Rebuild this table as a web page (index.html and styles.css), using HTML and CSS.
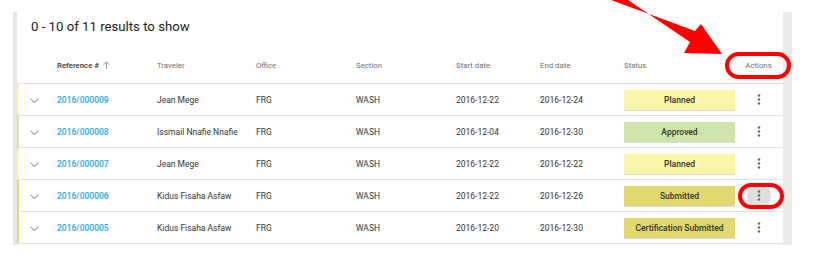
FILE: index.html
```html
<!DOCTYPE html>
<html>
<head>
<meta charset="utf-8">
<link rel="stylesheet" href="styles.css">
</head>
<body>
<div class="page">
  <div class="card">
    <div class="title">0 - 10 of 11 results to show</div>
    <div class="grid head">
      <div></div>
      <div class="sorted">Reference # <svg class="up" width="7" height="8" viewBox="0 0 7 8"><path d="M3.5 8V1M0.8 3.6L3.5 0.9L6.2 3.6" fill="none" stroke="#8a8a8a" stroke-width="0.9"/></svg></div>
      <div>Traveler</div>
      <div>Office</div>
      <div>Section</div>
      <div>Start date</div>
      <div>End date</div>
      <div>Status</div>
      <div class="act">Actions</div>
    </div>

    <div class="grid row planned-edge">
      <div class="chev"><svg width="9" height="6" viewBox="0 0 9 6"><path d="M0.7 0.9L4.5 4.6L8.3 0.9" fill="none" stroke="#9a9a9a" stroke-width="1.1"/></svg></div>
      <div class="link">2016/000009</div>
      <div>Jean Mege</div>
      <div>FRG</div>
      <div>WASH</div>
      <div>2016-12-22</div>
      <div>2016-12-24</div>
      <div><span class="pill planned">Planned</span></div>
      <div class="act"><span class="dots"><svg width="4" height="11" viewBox="0 0 4 11"><circle cx="2" cy="1.5" r="1.2"/><circle cx="2" cy="5.5" r="1.2"/><circle cx="2" cy="9.5" r="1.2"/></svg></span></div>
    </div>

    <div class="grid row approved-edge">
      <div class="chev"><svg width="9" height="6" viewBox="0 0 9 6"><path d="M0.7 0.9L4.5 4.6L8.3 0.9" fill="none" stroke="#9a9a9a" stroke-width="1.1"/></svg></div>
      <div class="link">2016/000008</div>
      <div>Issmail Nnafie Nnafie</div>
      <div>FRG</div>
      <div>WASH</div>
      <div>2016-12-04</div>
      <div>2016-12-30</div>
      <div><span class="pill approved">Approved</span></div>
      <div class="act"><span class="dots"><svg width="4" height="11" viewBox="0 0 4 11"><circle cx="2" cy="1.5" r="1.2"/><circle cx="2" cy="5.5" r="1.2"/><circle cx="2" cy="9.5" r="1.2"/></svg></span></div>
    </div>

    <div class="grid row planned-edge">
      <div class="chev"><svg width="9" height="6" viewBox="0 0 9 6"><path d="M0.7 0.9L4.5 4.6L8.3 0.9" fill="none" stroke="#9a9a9a" stroke-width="1.1"/></svg></div>
      <div class="link">2016/000007</div>
      <div>Jean Mege</div>
      <div>FRG</div>
      <div>WASH</div>
      <div>2016-12-22</div>
      <div>2016-12-22</div>
      <div><span class="pill planned">Planned</span></div>
      <div class="act"><span class="dots"><svg width="4" height="11" viewBox="0 0 4 11"><circle cx="2" cy="1.5" r="1.2"/><circle cx="2" cy="5.5" r="1.2"/><circle cx="2" cy="9.5" r="1.2"/></svg></span></div>
    </div>

    <div class="grid row submitted-edge">
      <div class="chev"><svg width="9" height="6" viewBox="0 0 9 6"><path d="M0.7 0.9L4.5 4.6L8.3 0.9" fill="none" stroke="#9a9a9a" stroke-width="1.1"/></svg></div>
      <div class="link">2016/000006</div>
      <div>Kidus Fisaha Asfaw</div>
      <div>FRG</div>
      <div>WASH</div>
      <div>2016-12-22</div>
      <div>2016-12-26</div>
      <div><span class="pill submitted">Submitted</span></div>
      <div class="act"><span class="dots hover"><svg width="4" height="11" viewBox="0 0 4 11"><circle cx="2" cy="1.5" r="1.2"/><circle cx="2" cy="5.5" r="1.2"/><circle cx="2" cy="9.5" r="1.2"/></svg></span></div>
    </div>

    <div class="grid row submitted-edge">
      <div class="chev"><svg width="9" height="6" viewBox="0 0 9 6"><path d="M0.7 0.9L4.5 4.6L8.3 0.9" fill="none" stroke="#9a9a9a" stroke-width="1.1"/></svg></div>
      <div class="link">2016/000005</div>
      <div>Kidus Fisaha Asfaw</div>
      <div>FRG</div>
      <div>WASH</div>
      <div>2016-12-20</div>
      <div>2016-12-30</div>
      <div><span class="pill submitted">Certification Submitted</span></div>
      <div class="act"><span class="dots"><svg width="4" height="11" viewBox="0 0 4 11"><circle cx="2" cy="1.5" r="1.2"/><circle cx="2" cy="5.5" r="1.2"/><circle cx="2" cy="9.5" r="1.2"/></svg></span></div>
    </div>
  </div>

  <div class="ring ring-head"></div>
  <div class="ring ring-row"></div>
  <svg class="arrow" width="818" height="255" viewBox="0 0 818 255">
    <polygon points="611,0 628,0 690,42 684,53 722,54 701,24 695,31" fill="#ff0000"/>
  </svg>
</div>
</body>
</html>
```

FILE: styles.css
```css
html, body {
  margin: 0;
  background: #fff;
}

body {
  font-family: Roboto, "Liberation Sans", sans-serif;
  color: #333;
}

.page {
  position: relative;
  width: 818px;
  height: 255px;
  padding: 12px 0 0 13px;
  box-sizing: border-box;
  overflow: hidden;
}

.card {
  width: 779px;
  height: 233px;
  box-sizing: border-box;
  background: #fff;
  border-left: 4px solid #e6e6e6;
  border-right: 9px solid #ebebeb;
}

.title {
  font-size: 13.2px;
  line-height: 16px;
  color: #222;
  padding: 7px 0 12px 14px;
}

.grid {
  display: grid;
  grid-template-columns: 38px 100px 99px 100px 100px 84px 84px 111px 1fr;
  align-items: center;
  box-sizing: border-box;
  border-left: 2px solid transparent;
  border-bottom: 1px solid #e2e2e2;
}

.head {
  height: 37px;
  font-size: 7.8px;
  color: #707070;
  border-bottom-color: #dcdcdc;
}

.head .sorted {
  color: #333;
  font-weight: 500;
  display: flex;
  align-items: center;
  gap: 4px;
}

.row {
  height: 32px;
  font-size: 8.5px;
  color: #333;
}

.planned-edge { border-left-color: #fbf5aa; }
.approved-edge { border-left-color: #cde5a8; }
.submitted-edge { border-left-color: #e1d86e; }

.chev {
  display: flex;
  padding-left: 11px;
  padding-top: 2px;
}

.link {
  color: #1aa9ea;
  font-weight: 500;
}

.pill {
  display: flex;
  align-items: center;
  justify-content: center;
  height: 20px;
  font-weight: 500;
  color: #333;
  box-shadow: 0 1px 0 rgba(0, 0, 0, 0.14);
}

.planned { background: #fbf5aa; }
.approved { background: #cde5a8; }
.submitted { background: #e1d86e; }

.act {
  display: flex;
  justify-content: center;
  padding-right: 1px;
}

.dots {
  display: flex;
  align-items: center;
  justify-content: center;
  width: 24px;
  height: 24px;
  border-radius: 50%;
  fill: #666;
}

.dots.hover {
  background: #dedede;
}

.ring {
  position: absolute;
  box-sizing: border-box;
  border: 4px solid #ff0000;
}

.ring-head {
  left: 725px;
  top: 52px;
  width: 66px;
  height: 27px;
  border-radius: 14px;
}

.ring-row {
  left: 738px;
  top: 183px;
  width: 46px;
  height: 26px;
  border-radius: 13px;
}

.arrow {
  position: absolute;
  left: 0;
  top: 0;
  pointer-events: none;
}
```
